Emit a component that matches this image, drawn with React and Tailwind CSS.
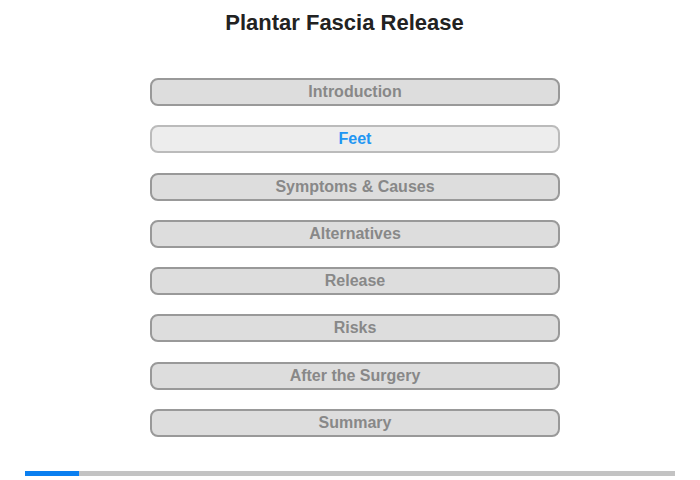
export default function App() {
  const items = ["Introduction", "Feet", "Symptoms & Causes", "Alternatives", "Release", "Risks", "After the Surgery", "Summary"];
  return (
    <div className="w-[700px] h-[480px] bg-white relative overflow-hidden" style={{ fontFamily: '"Liberation Sans", Arial, sans-serif' }}>
      <div className="pt-[11px] pr-[11px] text-center text-[22px] leading-[24px] font-bold text-[#222]">Plantar Fascia Release</div>
      <div className="mt-[43px] ml-[150px] w-[410px] flex flex-col gap-[19.3px]">
        {items.map((t) => (
          <div
            key={t}
            className={
              t === "Feet"
                ? "h-[28px] rounded-[8px] border-2 border-[#bbbbbb] bg-[#ededed] flex items-center justify-center text-[16px] font-bold text-[#2196f3]"
                : "h-[28px] rounded-[8px] border-2 border-[#999999] bg-[#dddddd] flex items-center justify-center text-[16px] font-bold text-[#888888]"
            }
          >
            {t}
          </div>
        ))}
      </div>
      <div className="absolute left-[25px] top-[471px] w-[650px] h-[5px] bg-[#c3c3c3]">
        <div className="w-[54px] h-full bg-[#0a7ff0]" />
      </div>
    </div>
  );
}
